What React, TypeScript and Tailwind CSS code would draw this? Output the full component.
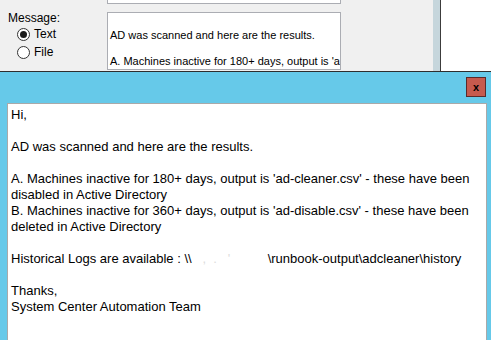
import React from "react";

function Radio({ checked, label }: { checked?: boolean; label: string }) {
  return (
    <div className="flex items-center gap-[4px] h-[18px]">
      <span className="flex h-[13px] w-[13px] items-center justify-center rounded-full border border-[#333] bg-white">
        {checked && <span className="h-[7px] w-[7px] rounded-full bg-[#1a1a1a]" />}
      </span>
      <span>{label}</span>
    </div>
  );
}

export default function App() {
  return (
    <div className="relative h-[340px] w-[491px] overflow-hidden bg-[#f0f0f0] font-['Liberation_Sans',Arial,sans-serif] text-[#000]">
      {/* background form (other window) */}
      <div className="flex h-[71px]">
        <div className="relative w-[433px] text-[12px] leading-[13px]">
          <div className="ml-[107px] h-[4px] w-[234px] border border-t-0 border-[#abadb3] bg-white" />
          <div className="flex">
            <div className="w-[107px] pl-[8px] pt-[8px]">
              <div>Message:</div>
              <div className="flex flex-col pl-[9px]">
                <Radio checked label="Text" />
                <Radio label="File" />
              </div>
            </div>
            <div className="mt-[8px] h-[58px] w-[234px] overflow-hidden whitespace-nowrap border border-[#abadb3] bg-white pl-[2px] pt-[3px] text-[11px] leading-[13px]">
              <div>&nbsp;</div>
              <div>AD was scanned and here are the results.</div>
              <div>&nbsp;</div>
              <div>A. Machines inactive for 180+ days, output is 'a</div>
            </div>
          </div>
        </div>
        <div className="w-[7px] bg-[#c6d6dc]" />
        <div className="w-[1px] bg-[#3c3c3c]" />
        <div className="flex-1 bg-white" />
      </div>
      <div className="h-[1px] bg-[#2e2e2e]" />

      {/* popup window */}
      <div className="flex h-[268px] flex-col bg-[#66c9e9]">
        <div className="flex h-[31px] justify-end pr-[5px] pt-[5px]">
          <div className="flex h-[20px] w-[20px] items-center justify-center border border-[#5a2a2a] bg-[#c65a4e] text-[11px] font-bold leading-none text-black">
            x
          </div>
        </div>
        <div className="ml-[7px] mr-[4px] flex-1 border border-b-0 border-[#a9a9a9] bg-white pl-[3px] pt-[3px] text-[13px] leading-[16px]">
          <div>Hi,</div>
          <div>&nbsp;</div>
          <div>AD was scanned and here are the results.</div>
          <div>&nbsp;</div>
          <div>A. Machines inactive for 180+ days, output is 'ad-cleaner.csv' - these have been</div>
          <div>disabled in Active Directory</div>
          <div>B. Machines inactive for 360+ days, output is 'ad-disable.csv' - these have been</div>
          <div>deleted in Active Directory</div>
          <div>&nbsp;</div>
          <div className="whitespace-nowrap">
            Historical Logs are available : \\
            <span className="inline-block w-[76px] text-[#dcdcdc]">&nbsp;&nbsp;&nbsp;,&nbsp;&nbsp;.&nbsp;&nbsp;&nbsp;'</span>
            \runbook-output\adcleaner\history
          </div>
          <div>&nbsp;</div>
          <div>Thanks,</div>
          <div>System Center Automation Team</div>
        </div>
      </div>
    </div>
  );
}
